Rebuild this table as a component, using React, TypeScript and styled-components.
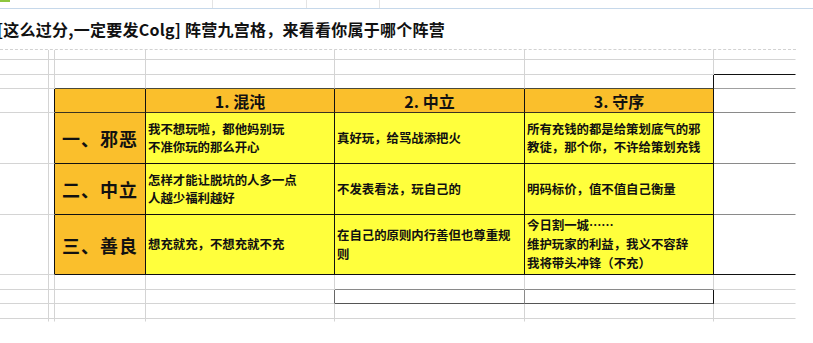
import React from "react";
import styled, { createGlobalStyle } from "styled-components";

const GlobalStyle = createGlobalStyle`
  html, body {
    margin: 0;
    padding: 0;
    background: #ffffff;
  }
  body {
    font-family: "Noto Sans CJK SC", "Noto Sans", sans-serif;
    color: #111111;
  }
`;

const COL_WIDTHS = [49, 6, 91, 189, 190, 189, 82];
const ROW_HEIGHTS = [10, 15, 14, 24, 51, 51, 60, 15, 14, 15, 3];

const GRID = "#d4d4d4";
const INK = "#111111";

type Kind = "blank" | "corner" | "head" | "label" | "body";

interface CellDef {
  kind: Kind;
  right: string;
  bottom: string;
  lines?: string[];
  tall?: boolean;
}

const HEADERS = ["1. 混沌", "2. 中立", "3. 守序"];

const ROWS: { label: string; cells: { lines: string[]; tall?: boolean }[] }[] = [
  {
    label: "一、邪恶",
    cells: [
      { lines: ["我不想玩啦，都他妈别玩", "不准你玩的那么开心"] },
      { lines: ["真好玩，给骂战添把火"] },
      { lines: ["所有充钱的都是给策划底气的邪", "教徒，那个你，不许给策划充钱"] },
    ],
  },
  {
    label: "二、中立",
    cells: [
      { lines: ["怎样才能让脱坑的人多一点", "人越少福利越好"] },
      { lines: ["不发表看法，玩自己的"] },
      { lines: ["明码标价，值不值自己衡量"] },
    ],
  },
  {
    label: "三、善良",
    cells: [
      { lines: ["想充就充，不想充就不充"] },
      { lines: ["在自己的原则内行善但也尊重规", "则"], tall: true },
      { lines: ["今日割一城……", "维护玩家的利益，我义不容辞", "我将带头冲锋（不充）"], tall: true },
    ],
  },
];

// which spreadsheet cell gets which look
function describe(r: number, c: number): CellDef {
  const last = c === COL_WIDTHS.length - 1;
  const tail = r === ROW_HEIGHTS.length - 1;
  let right = last ? "transparent" : GRID;
  let bottom = tail ? "transparent" : GRID;

  const inTable = r >= 3 && r <= 6 && c >= 2 && c <= 5;
  if (inTable) {
    const row = r - 3;
    const col = c - 2;
    if (row === 0) {
      return { kind: col === 0 ? "corner" : "head", right: INK, bottom: "#3a3320", lines: col === 0 ? [] : [HEADERS[col - 1]] };
    }
    const data = ROWS[row - 1];
    if (col === 0) return { kind: "label", right: INK, bottom: INK, lines: [data.label] };
    const cell = data.cells[col - 1];
    return { kind: "body", right: INK, bottom: INK, lines: cell.lines, tall: cell.tall };
  }

  // table frame seen from outside
  if (r === 2 && c >= 2 && c <= 5) bottom = "#4a4a3a";
  if (r >= 3 && r <= 6 && c === 1) right = INK;
  if (r === 2 && c === 5) right = INK;
  if (r === 1 && c === 6) bottom = INK;
  if (c === 6 && r === 2) bottom = "#a0a0a0";
  if (c === 6 && (r === 3 || r === 4 || r === 5)) bottom = "#8a8a8a";
  if (c === 6 && r === 6) bottom = INK;

  // boxed cells under the table (columns 2 and 3)
  if (r === 7 && (c === 4 || c === 5)) bottom = "#8a8a8a";
  if (r === 8 && c === 3) right = "#666666";
  if (r === 8 && c === 4) { right = "#8a8a8a"; bottom = "#555555"; }
  if (r === 8 && c === 5) { right = INK; bottom = "#555555"; }

  return { kind: "blank", right, bottom };
}

export default function App() {
  const cells: React.ReactNode[] = [];
  ROW_HEIGHTS.forEach((_, r) => {
    COL_WIDTHS.forEach((__, c) => {
      const d = describe(r, c);
      cells.push(
        <Cell key={`${r}-${c}`} $kind={d.kind} $right={d.right} $bottom={d.bottom} $tall={d.tall}>
          {d.lines?.map((l, i) => (
            <span key={i}>{l}</span>
          ))}
        </Cell>
      );
    });
  });

  return (
    <>
      <GlobalStyle />
      <Page>
        <TopStrip>
          <GreenTab />
          <Tick $w={213} />
          <Tick $w={94} />
          <Tick $w={73} />
        </TopStrip>
        <Title>[这么过分,一定要发Colg] 阵营九宫格，来看看你属于哪个阵营</Title>
        <Sheet>{cells}</Sheet>
      </Page>
    </>
  );
}

const Page = styled.div`
  width: 813px;
  height: 343px;
  overflow: hidden;
  background: #ffffff;
`;

const TopStrip = styled.div`
  position: relative;
  display: flex;
  height: 8px;
  border-bottom: 1px solid #c6d8ea;
`;

const GreenTab = styled.div`
  position: absolute;
  left: 0;
  top: 0;
  width: 10px;
  height: 2px;
  background: #8dc63f;
`;

const Tick = styled.div<{ $w: number }>`
  flex: 0 0 ${(p) => p.$w}px;
  box-sizing: border-box;
  border-right: 1px solid #e4e4e4;
`;

const Title = styled.div`
  height: 40px;
  line-height: 40px;
  font-size: 16px;
  font-weight: 700;
  letter-spacing: 0.25px;
  white-space: nowrap;
  text-indent: -3px;
  color: #111111;
`;

const Sheet = styled.div`
  display: grid;
  grid-template-columns: ${COL_WIDTHS.map((w) => `${w}px`).join(" ")};
  grid-template-rows: ${ROW_HEIGHTS.map((h) => `${h}px`).join(" ")};
  width: max-content;
  border-top: 1px dashed #d2d2d2;
`;

const Cell = styled.div<{ $kind: Kind; $right: string; $bottom: string; $tall?: boolean }>`
  box-sizing: border-box;
  border-right: 1px solid ${(p) => p.$right};
  border-bottom: 1px solid ${(p) => p.$bottom};
  background: ${(p) =>
    p.$kind === "body" ? "#ffff3c" : p.$kind === "blank" ? "#ffffff" : "#fabf2c"};
  display: flex;
  flex-direction: column;
  justify-content: center;
  align-items: ${(p) => (p.$kind === "body" ? "flex-start" : "center")};
  padding-left: ${(p) => (p.$kind === "body" ? "2px" : "0")};
  overflow: hidden;
  white-space: nowrap;
  color: ${INK};
  font-weight: 700;
  font-size: ${(p) => (p.$kind === "label" ? "18px" : p.$kind === "head" ? "16px" : "12.4px")};
  letter-spacing: ${(p) => (p.$kind === "label" ? "1px" : "0")};
  line-height: ${(p) => (p.$tall ? "19px" : p.$kind === "body" ? "18.5px" : "20px")};
`;
